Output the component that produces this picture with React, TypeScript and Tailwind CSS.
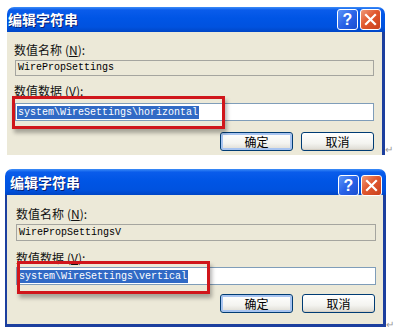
import React from "react";

const cjk = { fontFamily: '"Noto Sans CJK SC", "Liberation Sans", sans-serif' };
const mono = { fontFamily: '"Liberation Mono", "DejaVu Sans Mono", monospace' };

function HelpBtn() {
  return (
    <div className="w-[21px] h-[21px] rounded-[3px] border border-white flex items-center justify-center bg-[linear-gradient(135deg,#5b95f8_0%,#2a63e8_50%,#1a4fd0_100%)]">
      <span className="text-white text-[16px] font-bold leading-none" style={{ fontFamily: '"Liberation Sans", sans-serif' }}>?</span>
    </div>
  );
}

function CloseBtn() {
  return (
    <div className="w-[21px] h-[21px] rounded-[3px] border border-white flex items-center justify-center bg-[linear-gradient(135deg,#f09a7a_0%,#e1582f_45%,#c9401c_100%)]">
      <svg width="13" height="13" viewBox="0 0 13 13">
        <path d="M2 2 L11 11 M11 2 L2 11" stroke="white" strokeWidth="2.2" strokeLinecap="square" />
      </svg>
    </div>
  );
}

function TitleBar({ h, textPl, btnTop }: { h: number; textPl: string; btnTop: string }) {
  return (
    <div
      className="flex items-start justify-between rounded-tl-[7px] rounded-tr-[7px] bg-[linear-gradient(to_bottom,#3d8df7_0%,#0a5ceb_12%,#0055e5_45%,#0052df_80%,#0046c6_100%)]"
      style={{ height: h }}
    >
      <div className={`${textPl} h-full flex items-center`}>
        <span
          className="text-white text-[14px] font-bold [text-shadow:1px_1px_0_#0a1e6e]"
          style={cjk}
        >
          编辑字符串
        </span>
      </div>
      <div className={`flex gap-[2px] pr-[4px] ${btnTop}`}>
        <HelpBtn />
        <CloseBtn />
      </div>
    </div>
  );
}

function Btn({ label, def }: { label: string; def?: boolean }) {
  return (
    <div
      className={`w-[73px] h-[19px] rounded-[3px] border border-[#003c74] flex items-center justify-center bg-[linear-gradient(to_bottom,#ffffff_0%,#f4f4f0_60%,#dcdad2_100%)] ${
        def ? "shadow-[inset_0_0_0_2px_#a8c4f0]" : "shadow-[inset_0_-1px_0_#d6d0c5]"
      }`}
    >
      <span className="text-[12px] leading-none text-black" style={cjk}>
        {label}
      </span>
    </div>
  );
}

function Label({ text, k }: { text: string; k: string }) {
  return (
    <div className="text-[12px] leading-[14px] h-[14px] text-[#111]" style={cjk}>
      {text}<span className="ml-[3px]">(<span className="underline">{k}</span>):</span>
    </div>
  );
}

export default function App() {
  return (
    <div className="w-[397px] h-[333px] bg-white overflow-hidden">
      {/* Dialog 1 */}
      <div className="flex items-end pt-[7px] pl-[7px]">
        <div className="w-[378px]">
          <TitleBar h={25} textPl="pl-[1px]" btnTop="pt-[2px]" />
          <div className="h-[123px] bg-[#ece9d8] border-r-[3px] border-[#1c3f9e] pl-[7px] pr-[8px] pt-[11px]">
            <Label text="数值名称" k="N" />
            <div className="mt-[3px] ml-[1px] h-[16px] border border-[#a5a59f] bg-[#ece9d8] flex items-center pl-[2px]">
              <span className="text-[10px] leading-none text-black" style={mono}>WirePropSettings</span>
            </div>
            <div className="mt-[8px]">
              <Label text="数值数据" k="V" />
            </div>
            <div className="relative mt-[5px] ml-[1px] h-[18px] border border-[#7f9db9] bg-white flex items-center pl-[1px]">
              <span className="text-[10px] leading-[13px] bg-[#316ac5] text-white px-[1px]" style={mono}>
                system\WireSettings\horizontal
              </span>
              <div className="absolute left-[-4px] top-[-8px] w-[213px] h-[33px] border-[3px] border-[#d0161b] shadow-[2px_4px_4px_rgba(0,0,0,0.3)]" />
            </div>
            <div className="mt-[11px] flex justify-end gap-[8px]">
              <Btn label="确定" def />
              <Btn label="取消" />
            </div>
          </div>
        </div>
        <span className="text-[10px] leading-none text-[#9a9a9a] mb-[1px]" style={cjk}>↵</span>
      </div>

      {/* Dialog 2 */}
      <div className="flex items-end pt-[14px] pl-[5px]">
        <div className="w-[381px]">
          <TitleBar h={26} textPl="pl-[5px]" btnTop="pt-[6px]" />
          <div className="h-[132px] bg-[#ece9d8] border-l-[2px] border-r-[3px] border-b-[3px] border-[#1c3f9e] pl-[9px] pr-[7px] pt-[12px]">
            <Label text="数值名称" k="N" />
            <div className="mt-[3px] h-[17px] border border-[#a5a59f] bg-[#ece9d8] flex items-center pl-[2px]">
              <span className="text-[10px] leading-none text-black" style={mono}>WirePropSettingsV</span>
            </div>
            <div className="mt-[10px]">
              <Label text="数值数据" k="V" />
            </div>
            <div className="relative mt-[2px] h-[18px] border border-[#7f9db9] bg-white flex items-center pl-[1px]">
              <span className="text-[10px] leading-[13px] bg-[#316ac5] text-white px-[1px]" style={mono}>
                system\WireSettings\vertical
              </span>
              <div className="absolute left-[0px] top-[-7px] w-[193px] h-[33px] border-[3px] border-[#d0161b] shadow-[2px_4px_4px_rgba(0,0,0,0.3)]" />
            </div>
            <div className="mt-[9px] flex justify-end gap-[9px] pr-[1px]">
              <Btn label="确定" def />
              <Btn label="取消" />
            </div>
          </div>
        </div>
        <span className="text-[10px] leading-none text-[#9a9a9a] mb-[-2px]" style={cjk}>↵</span>
      </div>
    </div>
  );
}
